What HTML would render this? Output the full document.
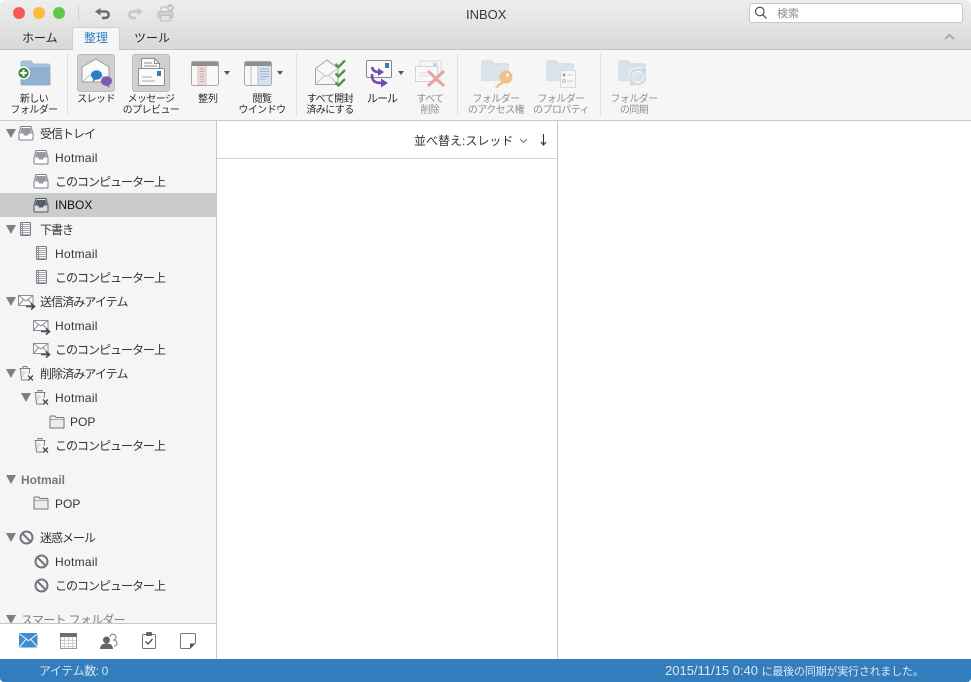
<!DOCTYPE html>
<html lang="ja"><head><meta charset="utf-8"><title>INBOX</title>
<style>
html,body{margin:0;padding:0;width:971px;height:682px;overflow:hidden;background:#fff}
*{box-sizing:border-box}
body{font-family:"Liberation Sans","Noto Sans CJK JP",sans-serif;color:#333;position:relative}
.a{position:absolute}
.t{position:absolute;white-space:nowrap}
svg{position:absolute;overflow:visible}
#win{position:absolute;left:0;top:0;width:971px;height:682px;overflow:hidden;border-radius:5px 5px 4px 4px;background:#fff}
.lab{position:absolute;font-size:10px;line-height:11px;text-align:center;white-space:nowrap;letter-spacing:-.55px;color:#2b2b2b;transform:translateX(-50%)}
.lab.d{color:#8f8f8f}
.sep{position:absolute;top:54px;height:62px;width:1px;background:#e0e0e0}
.r{position:absolute;font-size:12px;line-height:16px;white-space:nowrap;color:#333;letter-spacing:-1px}
.r.s{letter-spacing:-.9px}
.r.l{letter-spacing:0}
.r.h{letter-spacing:.3px}
.tri{position:absolute;width:0;height:0;border-left:5px solid transparent;border-right:5px solid transparent;border-top:9px solid #7f7f7f}
.tab{position:absolute;font-size:12px;line-height:16px;top:30px;color:#222;letter-spacing:0}
</style></head><body>
<svg width="0" height="0" style="position:absolute"><defs>
<symbol id="inbox" viewBox="0 0 16 16"><path d="M3 1.500h10l2 7v5.500a1 1 0 0 1-1 1H2a1 1 0 0 1-1-1V8.500z" fill="#fff" stroke="#7a8089"/><path d="M3.500 3h9l1.500 5.500H10.800l-.8 2H6l-.8-2H2z" fill="#959aa2"/></symbol>
<symbol id="inboxd" viewBox="0 0 16 16"><path d="M3 1.500h10l2 7v5.500a1 1 0 0 1-1 1H2a1 1 0 0 1-1-1V8.500z" fill="#dcdcdc" stroke="#50565f"/><path d="M3.500 3h9l1.500 5.500H10.800l-.8 2H6l-.8-2H2z" fill="#565c65"/></symbol>
<symbol id="draft" viewBox="0 0 14 16"><rect x="2.500" y="1.500" width="10" height="13" rx="1" fill="#fbfbfb" stroke="#737982"/><path d="M2.500 3.500h10M2.500 5.500h10M2.500 7.500h10M2.500 9.500h10M2.500 11.500h10M2.500 13.500h10" stroke="#a3a7ad" fill="none"/><path d="M4.500 1.500v13" stroke="#8c9198" fill="none"/></symbol>
<symbol id="sent" viewBox="0 0 20 16"><rect x=".5" y=".5" width="14.500" height="10" fill="#fbfbfb" stroke="#8a8f96"/><path d="M.5 .5l7.250 5.500 7.250-5.500M.5 10.500l5-6M15 10.500l-5-6" fill="none" stroke="#8a8f96"/><path d="M8 11.500h8M13 8.500l3.500 3-3.500 3" fill="none" stroke="#454b55" stroke-width="1.600"/></symbol>
<symbol id="trash" viewBox="0 0 17 17"><path d="M1.500 3l1 11h6" fill="none" stroke="#7b8089"/><path d="M10.500 3l-.3 5" fill="none" stroke="#7b8089"/><path d="M.5 2.500h11M4 2V.5h4V2" fill="none" stroke="#7b8089"/><path d="M4 5v6M6 5v3" stroke="#cdcfd2" fill="none"/><path d="M9 9.500l5 5M14 9.500l-5 5" stroke="#3e444d" stroke-width="1.300" fill="none"/></symbol>
<symbol id="folder" viewBox="0 0 16 14"><path d="M1 13V2a1 1 0 0 1 1-1h4l1 1.500h7a1 1 0 0 1 1 1V13z" fill="#ececed" stroke="#70767f" stroke-linejoin="round"/><path d="M1.500 4.500h13" stroke="#a9adb3"/></symbol>
<symbol id="block" viewBox="0 0 15 15"><circle cx="7.500" cy="7.500" r="6" fill="#f4f4f4" stroke="#72777f" stroke-width="2"/><path d="M3.500 3.500l8 8" stroke="#72777f" stroke-width="2"/></symbol>
<symbol id="gfolder" viewBox="0 0 33 25"><path d="M1 24V2.500a2 2 0 0 1 2-2h9l2.500 3.500H31a2 2 0 0 1 2 2V24z" fill="#d8e2eb" stroke="#ccd7e1"/><path d="M1 7h32v17H1z" fill="#dbe4ec"/></symbol>
</defs></svg>
<div id="win">
<!-- title bar -->
<div class="a" style="left:0;top:0;width:971px;height:50px;background:linear-gradient(#eeeeee,#d9d9d9);border-bottom:1px solid #c5c5c5"></div>
<div class="a" style="left:13px;top:7px;width:12px;height:12px;border-radius:50%;background:#f85b56"></div>
<div class="a" style="left:33px;top:7px;width:12px;height:12px;border-radius:50%;background:#fcbc38"></div>
<div class="a" style="left:53px;top:7px;width:12px;height:12px;border-radius:50%;background:#5fca48"></div>
<div class="a" style="left:78px;top:6px;width:1px;height:16px;background:#d3d3d3"></div>
<svg style="left:95px;top:8px" width="16" height="11" viewBox="0 0 16 11"><path d="M4 3.500h6.500a3.200 3.200 0 0 1 0 6.400H7" fill="none" stroke="#6d6d6d" stroke-width="2.600"/><path d="M0 3.500L5.500 0v7.500z" fill="#6d6d6d"/></svg>
<svg style="left:127px;top:8px" width="16" height="11" viewBox="0 0 16 11"><path d="M12 3.500H5.500a3.200 3.200 0 0 0 0 6.400H9" fill="none" stroke="#c6c6c6" stroke-width="2.600"/><path d="M16 3.500L10.500 0v7.500z" fill="#c6c6c6"/></svg>
<svg style="left:157px;top:4px" width="18" height="18" viewBox="0 0 18 18"><rect x="4" y="3" width="9" height="5" fill="none" stroke="#bdbdbd"/><rect x="1" y="7.500" width="15" height="6.500" rx="1.500" fill="#cfcfcf" stroke="#bdbdbd"/><rect x="4" y="11.500" width="9" height="5.500" fill="#e6e6e6" stroke="#bdbdbd"/><circle cx="13.500" cy="3.500" r="3.500" fill="#c2c2c2"/><path d="M11.800 3.500l1.300 1.300 2.200-2.400" stroke="#fff" fill="none"/></svg>
<div class="t" style="left:466px;top:7px;font-size:13px;line-height:16px;color:#3a3a3a">INBOX</div>
<div class="a" style="left:749px;top:3px;width:214px;height:20px;background:#fff;border:1px solid #c6c6c6;border-radius:3px"></div>
<svg style="left:754px;top:6px" width="14" height="14" viewBox="0 0 14 14"><circle cx="5.800" cy="5.500" r="4.300" fill="none" stroke="#444" stroke-width="1.100"/><path d="M8.800 8.700l3.700 3.800" stroke="#444" stroke-width="1.200"/></svg>
<div class="t" style="left:777px;top:6px;font-size:11px;line-height:16px;color:#8a8a8a">検索</div>
<svg style="left:944px;top:33px" width="11" height="8" viewBox="0 0 11 8"><path d="M1 6l4.500-4 4.500 4" fill="none" stroke="#ababab" stroke-width="2"/></svg>
<!-- tabs -->
<div class="a" style="left:72px;top:27px;width:48px;height:24px;background:#f6f6f6;border:1px solid #cfcfcf;border-bottom:0;border-radius:3px 3px 0 0"></div>
<div class="tab" style="left:22px">ホーム</div>
<div class="tab" style="left:84px;color:#2f7cc0">整理</div>
<div class="tab" style="left:134px">ツール</div>
<!-- ribbon -->
<div class="a" style="left:0;top:50px;width:971px;height:71px;background:#f6f6f6;border-bottom:1px solid #c8c8c8"></div>
<div class="sep" style="left:67px"></div><div class="sep" style="left:296px"></div><div class="sep" style="left:457px"></div><div class="sep" style="left:600px"></div>
<!-- new folder -->
<svg style="left:17px;top:60px" width="33" height="27" viewBox="0 0 33 27"><path d="M4 25V3a2 2 0 0 1 2-2h8l2 3h15a2 2 0 0 1 2 2v19z" fill="#a8c2d9" stroke="#9db8cf"/><path d="M4 7h29v18H4z" fill="#8fb0cf"/><circle cx="6.500" cy="13" r="6.500" fill="#fff"/><circle cx="6.500" cy="13" r="5.200" fill="#3f8b46"/><path d="M6.500 9.800v6.400M3.300 13h6.400" stroke="#fff" stroke-width="2"/></svg>
<div class="lab" style="left:34px;top:94px">新しい<br>フォルダー</div>
<!-- thread -->
<div class="a" style="left:77px;top:54px;width:38px;height:38px;background:#d0d0d0;border:1px solid #bcbcbc;border-radius:3px"></div>
<svg style="left:81px;top:58px" width="32" height="29" viewBox="0 0 32 29"><path d="M1 9L15 1l13 8v15H1z" fill="#fafafa" stroke="#9c9c9c"/><path d="M1 24l9-8M28 24l-9-8" stroke="#c4c4c4" fill="none"/><ellipse cx="15.500" cy="17" rx="5.500" ry="4.800" fill="#2f7fc8"/><path d="M12.500 20l-1 4 4-3z" fill="#2f7fc8"/><ellipse cx="25.500" cy="23" rx="5.500" ry="4.800" fill="#7d5bb0"/><path d="M27 26l2 4-5-3z" fill="#7d5bb0"/></svg>
<div class="lab" style="left:96px;top:94px">スレッド</div>
<!-- preview -->
<div class="a" style="left:132px;top:54px;width:38px;height:38px;background:#d0d0d0;border:1px solid #bcbcbc;border-radius:3px"></div>
<svg style="left:138px;top:58px" width="27" height="29" viewBox="0 0 27 29"><path d="M3.500 13V.5h13l5 5V13" fill="#fafafa" stroke="#8f8f8f"/><path d="M16.500 .5v5h5M6 5h8M6 8h13" fill="none" stroke="#8f8f8f"/><rect x=".5" y="10.500" width="26" height="17" rx="1" fill="#fbfbfb" stroke="#8f8f8f"/><rect x="19" y="13" width="4" height="5" fill="#2f7fc8"/><path d="M4 19h10M4 23h13" stroke="#aaa"/></svg>
<div class="lab" style="left:151px;top:94px">メッセージ<br>のプレビュー</div>
<!-- arrange -->
<svg style="left:191px;top:61px" width="28" height="25" viewBox="0 0 28 25"><rect x=".5" y=".5" width="27" height="24" rx="2" fill="#f8f8f8" stroke="#aaa"/><rect x="1" y="1" width="26" height="4" fill="#8f8f8f"/><rect x="7" y="5" width="8" height="19" fill="#f0d8d4"/><path d="M9 8h4M9 10.500h4M9 13h4M9 15.500h4M9 18h4M9 20.500h4" stroke="#cfa7a1"/><path d="M7 5v19M15 5v19" stroke="#ccc"/></svg>
<div class="a" style="left:224px;top:71px;border-left:3px solid transparent;border-right:3px solid transparent;border-top:4px solid #555"></div>
<div class="lab" style="left:208px;top:94px;letter-spacing:0">整列</div>
<!-- reading -->
<svg style="left:244px;top:61px" width="28" height="25" viewBox="0 0 28 25"><rect x=".5" y=".5" width="27" height="24" rx="2" fill="#f8f8f8" stroke="#aaa"/><rect x="1" y="1" width="26" height="4" fill="#8f8f8f"/><rect x="14" y="5" width="13" height="19" fill="#d5e3f0"/><path d="M16 8h9M16 10.500h9M16 13h9M16 15.500h9M16 18h6" stroke="#9fb6cc"/><path d="M7 5v19M14 5v19" stroke="#bbb"/></svg>
<div class="a" style="left:277px;top:71px;border-left:3px solid transparent;border-right:3px solid transparent;border-top:4px solid #555"></div>
<div class="lab" style="left:262px;top:94px">閲覧<br>ウインドウ</div>
<!-- mark all read -->
<svg style="left:315px;top:59px" width="34" height="28" viewBox="0 0 34 28"><path d="M.5 9.500L12 1l11 8.500v16H.5z" fill="#f7f7f7" stroke="#a4a4a4"/><path d="M.5 9.500l11 8 11.500-8M.5 25.500l9-9M23 25.500l-9-9" fill="none" stroke="#c6c6c6"/><path d="M20.500 5l3 3 6.500-6.500M20.500 14.500l3 3 6.500-6.500M20.500 23.500l3 3 6.500-6.500" fill="none" stroke="#4d9142" stroke-width="2.300"/></svg>
<div class="lab" style="left:330px;top:94px">すべて開封<br>済みにする</div>
<!-- rules -->
<svg style="left:366px;top:60px" width="27" height="28" viewBox="0 0 27 28"><rect x=".5" y=".5" width="25" height="17" fill="#fafafa" stroke="#888" rx="1"/><rect x="19" y="3" width="4" height="5" fill="#2f7fc8"/><path d="M6 7c1 4 3 5 7 5M6 14c0 7 2 9 10 9" fill="none" stroke="#6d4ea8" stroke-width="2.600"/><path d="M12 8l6 4-6 4zM15 18.500l7 4.500-7 4.500z" fill="#6d4ea8"/></svg>
<div class="a" style="left:398px;top:71px;border-left:3px solid transparent;border-right:3px solid transparent;border-top:4px solid #555"></div>
<div class="lab" style="left:382px;top:94px;font-size:11px;letter-spacing:-.9px">ルール</div>
<!-- delete all -->
<svg style="left:415px;top:60px" width="31" height="27" viewBox="0 0 31 27"><path d="M5 6V1h21v14" fill="#f5f5f5" stroke="#d8d8d8"/><rect x=".5" y="6.500" width="22" height="15" fill="#f8f8f8" stroke="#d4d4d4"/><rect x="18" y="3" width="4" height="4" fill="#bcd6ea"/><path d="M4 13h8M4 16h11" stroke="#ddd"/><path d="M13 11l16 15M29 11L13 26" stroke="#e2a7a0" stroke-width="3"/></svg>
<div class="lab d" style="left:430px;top:94px">すべて<br>削除</div>
<!-- access -->
<svg style="left:481px;top:60px" width="32" height="29" viewBox="0 0 32 29"><use href="#gfolder" width="28" height="22"/><circle cx="25" cy="17" r="6.500" fill="#ecc388"/><circle cx="26.500" cy="15" r="1.600" fill="#f6f6f6"/><path d="M21 21L14 26.500l1.500 1.500 2-.5 1-2 2-.5 4-3.500z" fill="#ecc388"/></svg>
<div class="lab d" style="left:496px;top:94px">フォルダー<br>のアクセス権</div>
<!-- property -->
<svg style="left:546px;top:60px" width="32" height="29" viewBox="0 0 32 29"><use href="#gfolder" width="28" height="22"/><rect x="14.500" y="10.500" width="15" height="17" fill="#f7f7f7" stroke="#d8d8d8"/><circle cx="18" cy="15" r="1.500" fill="#7fa8cf"/><circle cx="18" cy="21" r="1.500" fill="none" stroke="#bbb"/><path d="M21 15h6M21 21h6" stroke="#ccc"/></svg>
<div class="lab d" style="left:561px;top:94px">フォルダー<br>のプロパティ</div>
<!-- sync -->
<svg style="left:618px;top:60px" width="32" height="29" viewBox="0 0 32 29"><use href="#gfolder" width="28" height="22"/><path d="M13 15a7 7 0 0 1 12-3M27 18a7 7 0 0 1-12 4" fill="none" stroke="#f6f6f6" stroke-width="4.500"/><path d="M13 15a7 7 0 0 1 12-3M27 18a7 7 0 0 1-12 4" fill="none" stroke="#d0d5da" stroke-width="2"/><path d="M23 8l5 1-1 5zM17 26l-5-1 1-5z" fill="#d0d5da"/></svg>
<div class="lab d" style="left:634px;top:94px">フォルダー<br>の同期</div>
<!-- list header -->
<div class="a" style="left:557px;top:121px;width:1px;height:538px;background:#c8c8c8"></div>
<div class="a" style="left:217px;top:158px;width:340px;height:1px;background:#d2d2d2"></div>
<div class="t" style="left:414px;top:133px;font-size:12px;line-height:16px;color:#333;letter-spacing:0">並べ替え:スレッド</div>
<svg style="left:519px;top:138px" width="9" height="6" viewBox="0 0 9 6"><path d="M1 1l3.500 3.500L8 1" fill="none" stroke="#777" stroke-width="1"/></svg>
<svg style="left:540px;top:134px" width="7" height="12" viewBox="0 0 7 12"><path d="M3.500 0v10.500M1 8l2.500 3L6 8" fill="none" stroke="#333" stroke-width="1.100"/></svg>
<!-- sidebar -->
<div class="a" style="left:0;top:121px;width:217px;height:502px;background:#f5f5f5;border-right:1px solid #c8c8c8;overflow:hidden" id="sb"></div>
<div class="a" style="left:0;top:193px;width:216px;height:24px;background:#cbcbcb"></div>

<div class="tri" style="left:6px;top:129px"></div><svg style="left:18px;top:125px" width="16" height="16"><use href="#inbox"/></svg><div class="r" style="left:40px;top:126px">受信トレイ</div>
<svg style="left:33px;top:149px" width="16" height="16"><use href="#inbox"/></svg><div class="r h" style="left:55px;top:150px">Hotmail</div>
<svg style="left:33px;top:173px" width="16" height="16"><use href="#inbox"/></svg><div class="r" style="left:55px;top:174px">このコンピューター上</div>
<svg style="left:33px;top:197px" width="16" height="16"><use href="#inboxd"/></svg><div class="r l" style="left:55px;top:197px;color:#111">INBOX</div>

<div class="tri" style="left:6px;top:225px"></div><svg style="left:18px;top:221px" width="14" height="16"><use href="#draft"/></svg><div class="r" style="left:40px;top:222px">下書き</div>
<svg style="left:34px;top:245px" width="14" height="16"><use href="#draft"/></svg><div class="r h" style="left:55px;top:246px">Hotmail</div>
<svg style="left:34px;top:269px" width="14" height="16"><use href="#draft"/></svg><div class="r" style="left:55px;top:270px">このコンピューター上</div>

<div class="tri" style="left:6px;top:297px"></div><svg style="left:18px;top:295px" width="20" height="16"><use href="#sent"/></svg><div class="r s" style="left:40px;top:294px">送信済みアイテム</div>
<svg style="left:33px;top:320px" width="20" height="16"><use href="#sent"/></svg><div class="r h" style="left:55px;top:318px">Hotmail</div>
<svg style="left:33px;top:343px" width="20" height="16"><use href="#sent"/></svg><div class="r" style="left:55px;top:342px">このコンピューター上</div>

<div class="tri" style="left:6px;top:369px"></div><svg style="left:19px;top:366px" width="17" height="17"><use href="#trash"/></svg><div class="r s" style="left:40px;top:366px">削除済みアイテム</div>
<div class="tri" style="left:21px;top:393px"></div><svg style="left:34px;top:390px" width="17" height="17"><use href="#trash"/></svg><div class="r h" style="left:55px;top:390px">Hotmail</div>
<svg style="left:49px;top:415px" width="16" height="14"><use href="#folder"/></svg><div class="r l" style="left:70px;top:414px">POP</div>
<svg style="left:34px;top:438px" width="17" height="17"><use href="#trash"/></svg><div class="r" style="left:55px;top:438px">このコンピューター上</div>

<div class="tri" style="left:6px;top:475px"></div><div class="r l" style="left:21px;top:472px;color:#777;font-weight:bold;font-size:12px">Hotmail</div>
<svg style="left:33px;top:496px" width="16" height="14"><use href="#folder"/></svg><div class="r l" style="left:55px;top:496px">POP</div>

<div class="tri" style="left:6px;top:533px"></div><svg style="left:19px;top:530px" width="15" height="15"><use href="#block"/></svg><div class="r" style="left:40px;top:530px">迷惑メール</div>
<svg style="left:34px;top:554px" width="15" height="15"><use href="#block"/></svg><div class="r h" style="left:55px;top:554px">Hotmail</div>
<svg style="left:34px;top:578px" width="15" height="15"><use href="#block"/></svg><div class="r" style="left:55px;top:578px">このコンピューター上</div>

<div class="tri" style="left:6px;top:615px"></div><div class="r" style="left:21px;top:612px;color:#808080;letter-spacing:-.7px">スマート フォルダー</div>

<!-- bottom nav -->
<div class="a" style="left:0;top:623px;width:217px;height:36px;background:#fff;border-top:1px solid #c8c8c8;border-right:1px solid #c8c8c8"></div>
<svg style="left:19px;top:633px" width="19" height="15" viewBox="0 0 19 15"><rect width="18.500" height="14.500" rx="1" fill="#3f8bd0"/><path d="M.5 .8l9 7 9-7M.5 14l6.500-7.500M18.500 14L12 6.500" fill="none" stroke="#e6f0f9" stroke-width="1.100"/></svg>
<svg style="left:60px;top:633px" width="17" height="16" viewBox="0 0 17 16"><rect x=".5" y=".5" width="16" height="15" fill="#fff" stroke="#9a9a9a"/><rect x="0" y="0" width="17" height="4" fill="#6e6e6e"/><path d="M4.500 4v11M8.500 4v11M12.500 4v11M1 7.500h15M1 10.500h15M1 13.500h15" stroke="#cfcfcf"/></svg>
<svg style="left:100px;top:633px" width="18" height="16" viewBox="0 0 18 16"><circle cx="6.500" cy="7" r="3.500" fill="#666"/><path d="M0 16c0-4 3-5.500 6.500-5.500S13 12 13 16z" fill="#666"/><path d="M10 4a3 3 0 1 1 4 3 4 4 0 0 1 3 4c0 1-1 2-3 2" fill="none" stroke="#777"/></svg>
<svg style="left:142px;top:632px" width="14" height="17" viewBox="0 0 14 17"><rect x=".5" y="2.500" width="13" height="14" rx="1" fill="#fff" stroke="#777"/><rect x="4" y="0" width="6" height="4" rx="1" fill="#666"/><path d="M3.500 9.500l2.500 2.500 4.500-5" fill="none" stroke="#555" stroke-width="1.400"/></svg>
<svg style="left:180px;top:633px" width="16" height="16" viewBox="0 0 16 16"><path d="M1.500 .5h13a1 1 0 0 1 1 1V10l-5.500 5.500H1.500a1 1 0 0 1-1-1V1.500a1 1 0 0 1 1-1z" fill="#fff" stroke="#777"/><path d="M15 10.500h-5v5z" fill="#555"/></svg>
<!-- status -->
<div class="a" style="left:0;top:659px;width:971px;height:23px;background:#337dbd"></div>
<div class="t" style="left:39px;top:663px;font-size:12px;line-height:16px;color:#d3e4f3;letter-spacing:-.4px">アイテム数: 0</div>
<div class="t" style="left:665px;top:663px;font-size:13px;line-height:16px;color:#d9e8f5;letter-spacing:0">2015/11/15 0:40 <span style="font-size:11px;letter-spacing:-.2px">に最後の同期が実行されました。</span></div>
</div>
</body></html>
